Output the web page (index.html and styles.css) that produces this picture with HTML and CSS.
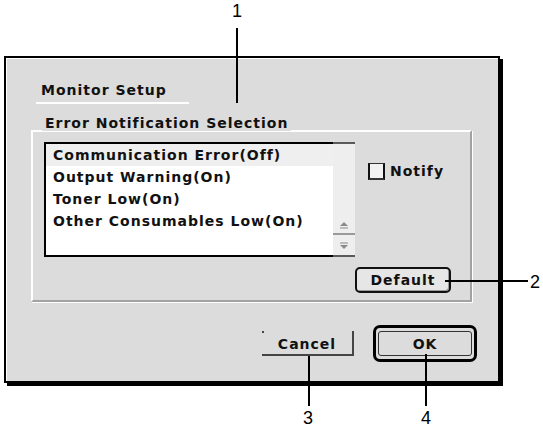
FILE: index.html
```html
<!DOCTYPE html>
<html lang="en">
<head>
<meta charset="utf-8">
<title>Monitor Setup</title>
<link rel="stylesheet" href="styles.css">
</head>
<body>
<div class="page">
  <div class="dialog">
    <div class="title-wrap"><span class="title">Monitor Setup</span></div>
    <div class="group">
      <div class="group-label">Error Notification Selection</div>
      <div class="group-row">
        <div class="list">
          <ul class="items">
            <li class="item selected">Communication Error(Off)</li>
            <li class="item">Output Warning(On)</li>
            <li class="item">Toner Low(On)</li>
            <li class="item">Other Consumables Low(On)</li>
          </ul>
          <div class="scrollbar">
            <svg class="arrows" width="22" height="35" viewBox="0 0 22 35">
              <polygon points="7,6 11,2 15,6" fill="#8a8a8a"/>
              <line x1="7" y1="8" x2="15" y2="8" stroke="#8a8a8a" stroke-width="1"/>
              <line x1="0" y1="14" x2="22" y2="14" stroke="#9a9a9a" stroke-width="2"/>
              <line x1="7" y1="23" x2="15" y2="23" stroke="#8a8a8a" stroke-width="1"/>
              <polygon points="7,25 15,25 11,29" fill="#8a8a8a"/>
            </svg>
          </div>
        </div>
        <label class="notify"><span class="check"></span><span class="notify-text">Notify</span></label>
      </div>
      <button class="btn default">Default</button>
    </div>
    <div class="actions">
      <button class="btn cancel">Cancel</button>
      <div class="ok-ring"><button class="btn ok">OK</button></div>
    </div>
  </div>

  <div class="callout-num n1">1</div>
  <div class="callout-line l1"></div>
  <div class="callout-line l2"></div>
  <div class="callout-num n2">2</div>
  <div class="callout-line l3"></div>
  <div class="callout-num n3">3</div>
  <div class="callout-line l4"></div>
  <div class="callout-num n4">4</div>
</div>
</body>
</html>
```

FILE: styles.css
```css
html, body {
  margin: 0;
  padding: 0;
  background: #ffffff;
}

.page {
  position: relative;
  width: 543px;
  height: 428px;
  overflow: hidden;
  font-family: "DejaVu Sans", "Liberation Sans", sans-serif;
  font-weight: bold;
  font-size: 14px;
  letter-spacing: 1px;
  color: #111111;
}

.dialog {
  box-sizing: border-box;
  margin: 56px 0 0 4px;
  width: 496px;
  height: 327px;
  border: 2px solid #000000;
  box-shadow: 3px 3px 0 #000000, inset 1px 1px 0 #ffffff;
  background: #dcdcdc;
  padding: 24px 0 0 25px;
  display: flex;
  flex-direction: column;
  align-items: flex-start;
}

.title-wrap {
  margin-left: 5px;
  width: 153px;
  box-sizing: border-box;
  padding: 0 0 4px 5px;
  border-bottom: 2px solid #ffffff;
  line-height: 16px;
  height: 22px;
  white-space: nowrap;
}

.group {
  box-sizing: border-box;
  margin-top: 26px;
  width: 441px;
  height: 172px;
  border-top: 2px solid #ffffff;
  border-left: 2px solid #ffffff;
  border-right: 2px solid #a2a2a2;
  border-bottom: 2px solid #a2a2a2;
  box-shadow: 1px 1px 0 #ffffff;
  padding: 0 0 0 11px;
  display: flex;
  flex-direction: column;
  align-items: flex-start;
}

.group-label {
  margin: -17px 0 0 -2px;
  padding: 0 3px;
  background: #dcdcdc;
  line-height: 16px;
  height: 16px;
  white-space: nowrap;
}

.group-row {
  margin-top: 11px;
  display: flex;
  align-items: flex-start;
}

.list {
  display: flex;
  width: 311px;
  height: 115px;
}

.items {
  box-sizing: border-box;
  width: 289px;
  height: 115px;
  margin: 0;
  padding: 0;
  list-style: none;
  background: #ffffff;
  border: 2px solid #000000;
  border-right: none;
}

.item {
  height: 22px;
  line-height: 22px;
  padding-left: 7px;
  white-space: nowrap;
}

.item.selected {
  background: #efefef;
}

.scrollbar {
  box-sizing: border-box;
  width: 22px;
  height: 115px;
  background: #eeeeee;
  border-top: 2px solid #5a5a5a;
  border-bottom: 2px solid #5a5a5a;
  display: flex;
  flex-direction: column;
  justify-content: flex-end;
}

.arrows {
  display: block;
}

.notify {
  margin: 21px 0 0 13px;
  display: flex;
  align-items: center;
  gap: 5px;
  line-height: 17px;
}

.check {
  box-sizing: border-box;
  width: 17px;
  height: 17px;
  background: #f2f2f2;
  border-left: 2px solid #111111;
  border-right: 2px solid #111111;
  border-top: 1px solid #333333;
  border-bottom: 2px solid #333333;
}

.btn {
  font-family: inherit;
  font-weight: bold;
  font-size: 14px;
  letter-spacing: 1px;
  color: #111111;
  padding: 0;
  margin: 0;
  line-height: 20px;
  cursor: default;
}

.default {
  box-sizing: border-box;
  margin: 10px 0 0 311px;
  width: 96px;
  height: 26px;
  border: 2px solid #111111;
  border-radius: 5px;
  background: #e6e6e6;
  box-shadow: inset -1px -1px 0 #9a9a9a;
}

.actions {
  margin-top: 23px;
  align-self: stretch;
  display: flex;
  justify-content: flex-end;
  align-items: center;
  gap: 19px;
  padding-right: 21px;
}

.cancel {
  position: relative;
  box-sizing: border-box;
  width: 92px;
  height: 25px;
  background: transparent;
  border: none;
  border-right: 2px solid #444444;
  border-bottom: 2px solid #444444;
  padding-top: 2px;
}

.cancel::before {
  content: "";
  position: absolute;
  left: 0;
  top: 0;
  width: 2px;
  height: 2px;
  background: #444444;
}

.ok-ring {
  box-sizing: border-box;
  width: 104px;
  height: 37px;
  border: 3px solid #000000;
  border-radius: 7px;
  padding: 3px 2px;
  display: flex;
}

.ok {
  flex: 1;
  box-sizing: border-box;
  border: 1px solid #333333;
  border-radius: 3px;
  background: #dcdcdc;
}

.callout-line {
  position: absolute;
  background: #000000;
}

.callout-num {
  position: absolute;
  font-family: "Liberation Sans", Arial, sans-serif;
  font-weight: normal;
  font-size: 18px;
  line-height: 14px;
  letter-spacing: 0;
  color: #000000;
}

.n1 { left: 232px; top: 4px; }
.l1 { left: 236px; top: 28px; width: 2px; height: 75px; }

.l2 { left: 445px; top: 280px; width: 83px; height: 2px; }
.n2 { left: 530px; top: 275px; }

.l3 { left: 308px; top: 356px; width: 2px; height: 50px; }
.n3 { left: 303px; top: 411px; }

.l4 { left: 425px; top: 354px; width: 2px; height: 52px; }
.n4 { left: 421px; top: 411px; }
```
